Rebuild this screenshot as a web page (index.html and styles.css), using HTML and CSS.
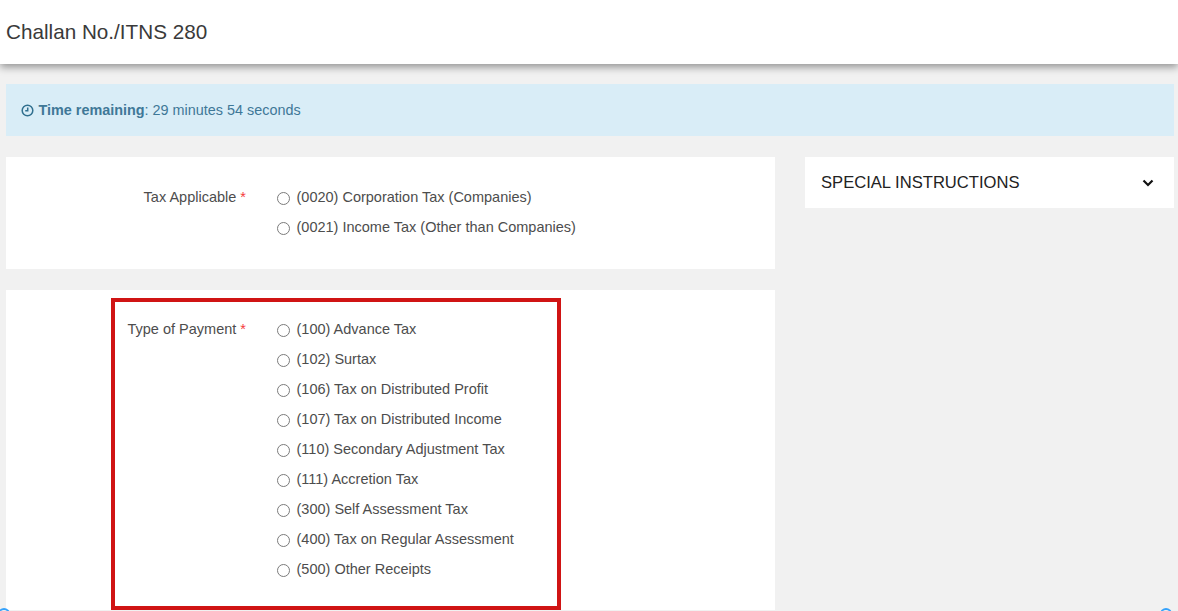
FILE: index.html
```html
<!DOCTYPE html>
<html lang="en">

<head>
    <meta charset="UTF-8">
    <meta name="viewport" content="width=device-width, initial-scale=1.0">

    <title>Challan No./ITNS 280</title>

    <link rel="stylesheet" href="styles.css">
</head>

<body>
    <header class="page-header">
        <h1 class="page-title">Challan No./ITNS 280</h1>
    </header>

    <main class="content">
        <div class="timer-alert">
            <svg class="timer-icon" viewBox="0 0 12 12" aria-hidden="true">
                <circle cx="6" cy="6" r="4.9"></circle>
                <path d="M6.2 3.2V6.3H3.9"></path>
            </svg>
            <span><strong>Time remaining</strong>: 29 minutes 54 seconds</span>
        </div>

        <div class="columns">
            <div class="form-column">
                <section class="card card-tax">
                    <div class="field">
                        <div class="field-label">Tax Applicable <span class="required">*</span></div>
                        <div class="radio-list">
                            <label class="radio-row"><span class="radio"></span>(0020) Corporation Tax (Companies)</label>
                            <label class="radio-row"><span class="radio"></span>(0021) Income Tax (Other than Companies)</label>
                        </div>
                    </div>
                </section>

                <section class="card card-payment">
                    <div class="field">
                        <div class="field-label">Type of Payment <span class="required">*</span></div>
                        <div class="radio-list">
                            <label class="radio-row"><span class="radio"></span>(100) Advance Tax</label>
                            <label class="radio-row"><span class="radio"></span>(102) Surtax</label>
                            <label class="radio-row"><span class="radio"></span>(106) Tax on Distributed Profit</label>
                            <label class="radio-row"><span class="radio"></span>(107) Tax on Distributed Income</label>
                            <label class="radio-row"><span class="radio"></span>(110) Secondary Adjustment Tax</label>
                            <label class="radio-row"><span class="radio"></span>(111) Accretion Tax</label>
                            <label class="radio-row"><span class="radio"></span>(300) Self Assessment Tax</label>
                            <label class="radio-row"><span class="radio"></span>(400) Tax on Regular Assessment</label>
                            <label class="radio-row"><span class="radio"></span>(500) Other Receipts</label>
                        </div>
                    </div>
                    <!-- annotation drawn over the form -->
                    <div class="highlight-box"></div>
                </section>
            </div>

            <aside class="side-column">
                <div class="accordion">
                    <span>SPECIAL INSTRUCTIONS</span>
                    <svg class="chevron" viewBox="0 0 12 8" aria-hidden="true">
                        <path d="M1.5 1.5L6 6L10.5 1.5"></path>
                    </svg>
                </div>
            </aside>
        </div>
    </main>

    <span class="corner-dot corner-left"></span>
    <span class="corner-dot corner-right"></span>
</body>

</html>
```

FILE: styles.css
```css
/* General styles */
html, body {
    height: 100%;
}

body {
    margin: 0;
    position: relative;
    overflow: hidden;
    background-color: #f1f1f1;
    font-family: "Liberation Sans", Arial, sans-serif;
    font-size: 14.5px;
    color: #4d4d4d;
}

/* Header */
.page-header {
    height: 64px;
    padding-left: 6px;
    display: flex;
    align-items: center;
    background-color: #ffffff;
    box-shadow: 0 3px 8px rgba(0, 0, 0, 0.4);
}

.page-title {
    margin: 0;
    font-size: 20.7px;
    font-weight: 400;
    color: #3a3a3a;
}

/* Content */
.content {
    padding: 20px 4px 0 6px;
}

.timer-alert {
    height: 52px;
    padding-left: 15px;
    display: flex;
    align-items: center;
    font-size: 14.4px;
    background-color: #d9edf7;
    color: #3f7897;
}

.timer-icon {
    width: 13px;
    height: 13px;
    margin-right: 4.5px;
    fill: none;
    stroke: #31708f;
    stroke-width: 1.4;
}

.columns {
    margin-top: 21px;
    display: flex;
    gap: 30px;
    align-items: flex-start;
}

.form-column {
    width: 769px;
}

.side-column {
    flex: 1;
}

/* Cards */
.card {
    position: relative;
    background-color: #ffffff;
}

.card-tax {
    height: 112px;
    padding-top: 25px;
    box-sizing: border-box;
}

.card-payment {
    height: 320px;
    margin-top: 21px;
    padding-top: 24px;
    box-sizing: border-box;
}

.field {
    display: flex;
}

.field-label {
    width: 240px;
    text-align: right;
    line-height: 30px;
}

.required {
    color: #f53c3c;
}

.radio-list {
    margin-left: 31px;
    display: flex;
    flex-direction: column;
}

.radio-row {
    height: 30px;
    display: flex;
    align-items: center;
    white-space: nowrap;
}

.radio {
    width: 11px;
    height: 11px;
    margin: 2px 6.5px 0 0;
    border: 1px solid #7b7b7b;
    border-radius: 50%;
    background-color: #ffffff;
    flex-shrink: 0;
}

/* Red annotation */
.highlight-box {
    position: absolute;
    left: 105px;
    top: 8px;
    width: 442px;
    height: 304px;
    border: 4px solid #d01414;
}

/* Accordion */
.accordion {
    height: 51px;
    padding: 0 20px 0 16px;
    display: flex;
    align-items: center;
    justify-content: space-between;
    background-color: #ffffff;
    font-size: 16.6px;
    color: #222222;
}

.chevron {
    width: 12px;
    height: 8px;
    fill: none;
    stroke: #111111;
    stroke-width: 2.2;
}

/* Blue circles cut off at the bottom edge */
.corner-dot {
    position: absolute;
    top: 608px;
    width: 8px;
    height: 8px;
    border: 2px solid #35a2fb;
    border-radius: 50%;
}

.corner-left {
    left: -2px;
}

.corner-right {
    left: 1160px;
}
```
